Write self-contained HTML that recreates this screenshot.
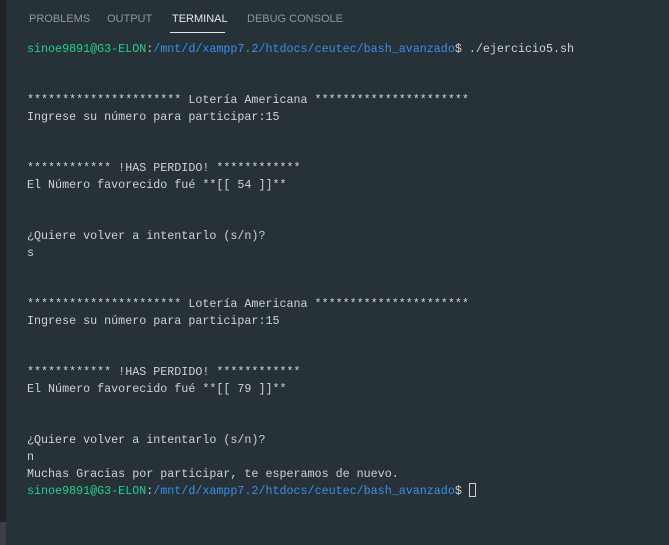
<!DOCTYPE html>
<html><head><style>
body{margin:0;width:669px;height:545px;background:#263238;overflow:hidden;position:relative;font-family:"Liberation Sans",sans-serif}
.strip{position:absolute;left:0;top:0;width:6px;height:522px;background:#1e2326}
.strip2{position:absolute;left:0;top:522px;width:6px;height:23px;background:#3a3f44}
.tabs{position:absolute;top:13px;left:29px;font-size:11px;color:#8e979c;white-space:nowrap}
.tabs span{position:absolute;top:0}
.ul{position:absolute;left:170px;top:32px;width:55px;height:1px;background:#e7e7e7}
pre{position:absolute;left:27px;top:41px;margin:0;font-family:"Liberation Mono",monospace;font-size:11.7px;line-height:17px;color:#cfd2d4}
.g{color:#23d18b}.b{color:#3b8eea}
.cur{display:inline-block;width:7px;height:14px;border:1px solid #cfd2d4;vertical-align:-3px;box-sizing:border-box}
</style></head><body>
<div class="strip"></div><div class="strip2"></div>
<div class="tabs"><span style="left:0">PROBLEMS</span><span style="left:78px">OUTPUT</span><span style="left:143px;color:#e7e7e7">TERMINAL</span><span style="left:218px">DEBUG CONSOLE</span></div>
<div class="ul"></div>
<pre><span class="g">sinoe9891@G3-ELON</span>:<span class="b">/mnt/d/xampp7.2/htdocs/ceutec/bash_avanzado</span>$ ./ejercicio5.sh


********************** Lotería Americana **********************
Ingrese su número para participar:15


************ !HAS PERDIDO! ************
El Número favorecido fué **[[ 54 ]]**


¿Quiere volver a intentarlo (s/n)?
s


********************** Lotería Americana **********************
Ingrese su número para participar:15


************ !HAS PERDIDO! ************
El Número favorecido fué **[[ 79 ]]**


¿Quiere volver a intentarlo (s/n)?
n
Muchas Gracias por participar, te esperamos de nuevo.
<span class="g">sinoe9891@G3-ELON</span>:<span class="b">/mnt/d/xampp7.2/htdocs/ceutec/bash_avanzado</span>$ <span class="cur"></span></pre>
</body></html>
